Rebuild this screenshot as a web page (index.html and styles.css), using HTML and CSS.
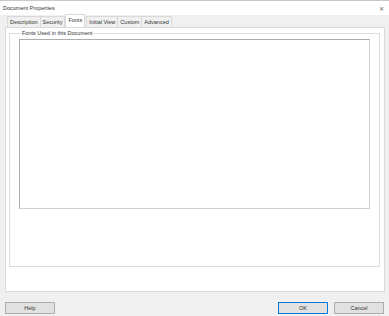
FILE: index.html
```html
<!DOCTYPE html>
<html lang="en">
<head>
    <meta charset="UTF-8">
    <meta name="viewport" content="width=device-width, initial-scale=1.0">
    <title>Document Properties</title>
    <link rel="stylesheet" href="styles.css">
</head>
<body>
    <div class="window">
        <div class="titlebar">
            <span class="title">Document Properties</span>
            <span class="close">&#x2715;</span>
        </div>
        <div class="tabs">
            <div class="tab">Description</div>
            <div class="tab">Security</div>
            <div class="tab active">Fonts</div>
            <div class="tab">Initial View</div>
            <div class="tab">Custom</div>
            <div class="tab">Advanced</div>
        </div>
        <div class="panel">
            <fieldset class="group">
                <legend>Fonts Used in this Document</legend>
                <div class="list"></div>
            </fieldset>
        </div>
        <div class="footer">
            <button class="btn">Help</button>
            <div class="right">
                <button class="btn default">OK</button>
                <button class="btn">Cancel</button>
            </div>
        </div>
    </div>
</body>
</html>
```

FILE: styles.css
```css
body { margin: 0; font-family: "Liberation Sans", Arial, sans-serif; font-size: 5.5px; color: #333; background: #f0f0f0; }
.window { width: 389px; height: 316px; display: flex; flex-direction: column; border-top: 1px solid #c8c8c8; box-sizing: border-box; }
.titlebar { height: 14px; background: #fff; display: flex; align-items: center; justify-content: space-between; padding: 0 5px 0 3px; }
.close { font-size: 6px; color: #666; }
.tabs { display: flex; height: 12px; padding: 0 0 0 7px; align-items: flex-end; }
.tab { height: 10px; line-height: 10px; padding: 0 2px; border: 1px solid #d9d9d9; border-bottom: none; background: #f0f0f0; margin-right: -1px; }
.tab.active { height: 12px; line-height: 11px; background: #fff; position: relative; z-index: 1; margin: 0 1px; }
.panel { flex: 1; margin: 0 4px 0 5px; background: #fff; border: 1px solid #d9d9d9; padding: 2px 4px 24px 3px; display: flex; }
.group { flex: 1; margin: 0; border: 1px solid #dcdcdc; padding: 3px 9px 57px 9px; display: flex; }
.group legend { padding: 0 1px; margin-left: 2px; }
.list { flex: 1; border: 1px solid #adadad; border-color: #adadad #d0d0d0 #d0d0d0 #adadad; background: #fff; }
.footer { height: 24px; display: flex; justify-content: space-between; align-items: flex-end; padding: 0 5px 2px; box-sizing: border-box; }
.right { display: flex; gap: 6px; }
.btn { width: 50px; height: 12px; padding: 0; font: inherit; font-size: 5.5px; background: #e1e1e1; border: 1px solid #adadad; color: #333; }
.btn.default { border-color: #0078d7; }
```
